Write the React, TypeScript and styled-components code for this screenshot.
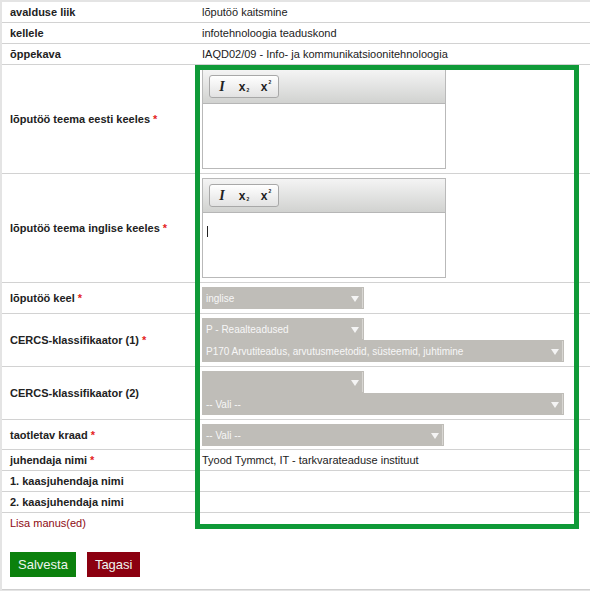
import styled, { createGlobalStyle } from "styled-components";

const GlobalStyle = createGlobalStyle`
    html, body {
        margin: 0;
        padding: 0;
        background: #e4e4e4;
    }
    body {
        padding: 2px 0 0 2px;
        font-family: "Liberation Sans", Arial, sans-serif;
        font-size: 11px;
        color: #222;
    }
`;

const Page = styled.div`
    position: relative;
    background: #fff;
    border-bottom: 1px solid #cfcfcf;
`;

const Table = styled.table`
    width: 100%;
    border-collapse: collapse;
    border-spacing: 0;
`;

const Row = styled.tr<{ $last?: boolean }>`
    border-bottom: ${({ $last }) => ($last ? "none" : "1px solid #d2d2d2")};
`;

const Label = styled.td<{ $link?: boolean }>`
    width: 187px;
    padding: 0 0 0 8px;
    height: 20px;
    vertical-align: middle;
    font-weight: ${({ $link }) => ($link ? "normal" : "bold")};
    color: ${({ $link }) => ($link ? "#8e0a12" : "#222")};
    white-space: nowrap;
`;

const Req = styled.span`
    color: #e41e1e;
    font-weight: bold;
`;

const Value = styled.td`
    padding: 0 5px;
    height: 20px;
    vertical-align: middle;
`;

const Field = styled.td<{ $bottom?: number }>`
    padding: 4px 5px ${({ $bottom }) => $bottom ?? 4}px;
    vertical-align: middle;
`;

const Editor = styled.div`
    width: 242px;
    border: 1px solid #b9b9b9;
    background: #fff;
`;

const Toolbar = styled.div`
    height: 34px;
    box-sizing: border-box;
    padding: 5px 0 0 6px;
    border-bottom: 1px solid #b6b6b6;
    background: linear-gradient(#f4f4f4, #d1d2d0);
`;

const ButtonGroup = styled.div`
    display: inline-flex;
    align-items: center;
    height: 23px;
    box-sizing: border-box;
    padding: 0 1px;
    border: 1px solid #a8a8a8;
    border-radius: 3px;
    background: linear-gradient(#ffffff, #e2e2e2);
`;

const ToolButton = styled.span`
    width: 22px;
    display: inline-flex;
    justify-content: center;
    align-items: center;
    color: #222;
`;

const ItalicGlyph = styled.span`
    font-family: "Liberation Serif", "Times New Roman", serif;
    font-style: italic;
    font-weight: bold;
    font-size: 14px;
`;

const XGlyph = styled.span`
    font-family: "Liberation Sans", Arial, sans-serif;
    font-weight: bold;
    font-size: 12px;
    line-height: 1;
`;

const Script = styled.span<{ $up?: boolean }>`
    font-size: 5px;
    font-weight: bold;
    position: relative;
    top: ${({ $up }) => ($up ? "-5px" : "3px")};
    margin-left: 1px;
`;

const EditorBody = styled.div`
    height: 64px;
    padding: 13px 0 0 4px;
    box-sizing: border-box;
`;

const Caret = styled.span`
    display: block;
    width: 1px;
    height: 11px;
    background: #222;
`;

const Select = styled.div<{ $width: number }>`
    position: relative;
    width: ${({ $width }) => $width}px;
    height: 22px;
    box-sizing: border-box;
    padding: 0 16px 0 4px;
    display: flex;
    align-items: center;
    background: #bfbdb8;
    color: #f7f7f7;
    font-size: 10px;
    white-space: nowrap;
    overflow: hidden;

    &::before {
        content: "";
        position: absolute;
        right: 5px;
        top: 9px;
        border-left: 4px solid transparent;
        border-right: 4px solid transparent;
        border-top: 6px solid #f4f4f4;
    }

    &::after {
        content: "";
        position: absolute;
        right: 1px;
        top: 1px;
        bottom: 1px;
        width: 1px;
        background: #d9d7d3;
    }
`;

const Actions = styled.div`
    display: flex;
    gap: 11px;
    padding: 19px 0 12px 8px;
`;

const Button = styled.button<{ $tone: "save" | "back" }>`
    height: 25px;
    padding: 0 8px;
    border: none;
    background: ${({ $tone }) => ($tone === "save" ? "#0b810d" : "#8b0010")};
    color: #eef4ee;
    font-family: "Liberation Sans", Arial, sans-serif;
    font-size: 13px;
    cursor: pointer;
`;

const Highlight = styled.div`
    position: absolute;
    left: 193px;
    top: 63px;
    width: 384px;
    height: 464px;
    box-sizing: border-box;
    border: 5px solid #0f9a38;
    pointer-events: none;
`;

const RichEditor = ({ caret }: { caret?: boolean }) => (
    <Editor>
        <Toolbar>
            <ButtonGroup>
                <ToolButton><ItalicGlyph>I</ItalicGlyph></ToolButton>
                <ToolButton><XGlyph>x</XGlyph><Script>2</Script></ToolButton>
                <ToolButton><XGlyph>x</XGlyph><Script $up>2</Script></ToolButton>
            </ButtonGroup>
        </Toolbar>
        <EditorBody>{caret && <Caret />}</EditorBody>
    </Editor>
);

export default function App() {
    return (
        <>
            <GlobalStyle />
            <Page>
                <Table>
                    <tbody>
                        <Row>
                            <Label>avalduse liik</Label>
                            <Value>lõputöö kaitsmine</Value>
                        </Row>
                        <Row>
                            <Label>kellele</Label>
                            <Value>infotehnoloogia teaduskond</Value>
                        </Row>
                        <Row>
                            <Label>õppekava</Label>
                            <Value>IAQD02/09 - Info- ja kommunikatsioonitehnoloogia</Value>
                        </Row>
                        <Row>
                            <Label>lõputöö teema eesti keeles <Req>*</Req></Label>
                            <Field><RichEditor /></Field>
                        </Row>
                        <Row>
                            <Label>lõputöö teema inglise keeles <Req>*</Req></Label>
                            <Field><RichEditor caret /></Field>
                        </Row>
                        <Row>
                            <Label>lõputöö keel <Req>*</Req></Label>
                            <Field><Select $width={162}>inglise</Select></Field>
                        </Row>
                        <Row>
                            <Label>CERCS-klassifikaator (1) <Req>*</Req></Label>
                            <Field>
                                <Select $width={162}>P - Reaalteadused</Select>
                                <Select $width={362}>P170 Arvutiteadus, arvutusmeetodid, süsteemid, juhtimine</Select>
                            </Field>
                        </Row>
                        <Row>
                            <Label>CERCS-klassifikaator (2)</Label>
                            <Field>
                                <Select $width={162} />
                                <Select $width={362}>-- Vali --</Select>
                            </Field>
                        </Row>
                        <Row>
                            <Label>taotletav kraad <Req>*</Req></Label>
                            <Field $bottom={3}><Select $width={242}>-- Vali --</Select></Field>
                        </Row>
                        <Row>
                            <Label>juhendaja nimi <Req>*</Req></Label>
                            <Value>Tyood Tymmct, IT - tarkvarateaduse instituut</Value>
                        </Row>
                        <Row>
                            <Label>1. kaasjuhendaja nimi</Label>
                            <Value />
                        </Row>
                        <Row>
                            <Label>2. kaasjuhendaja nimi</Label>
                            <Value />
                        </Row>
                        <Row $last>
                            <Label $link>Lisa manus(ed)</Label>
                            <Value />
                        </Row>
                    </tbody>
                </Table>
                <Actions>
                    <Button $tone="save">Salvesta</Button>
                    <Button $tone="back">Tagasi</Button>
                </Actions>
                <Highlight />
            </Page>
        </>
    );
}
